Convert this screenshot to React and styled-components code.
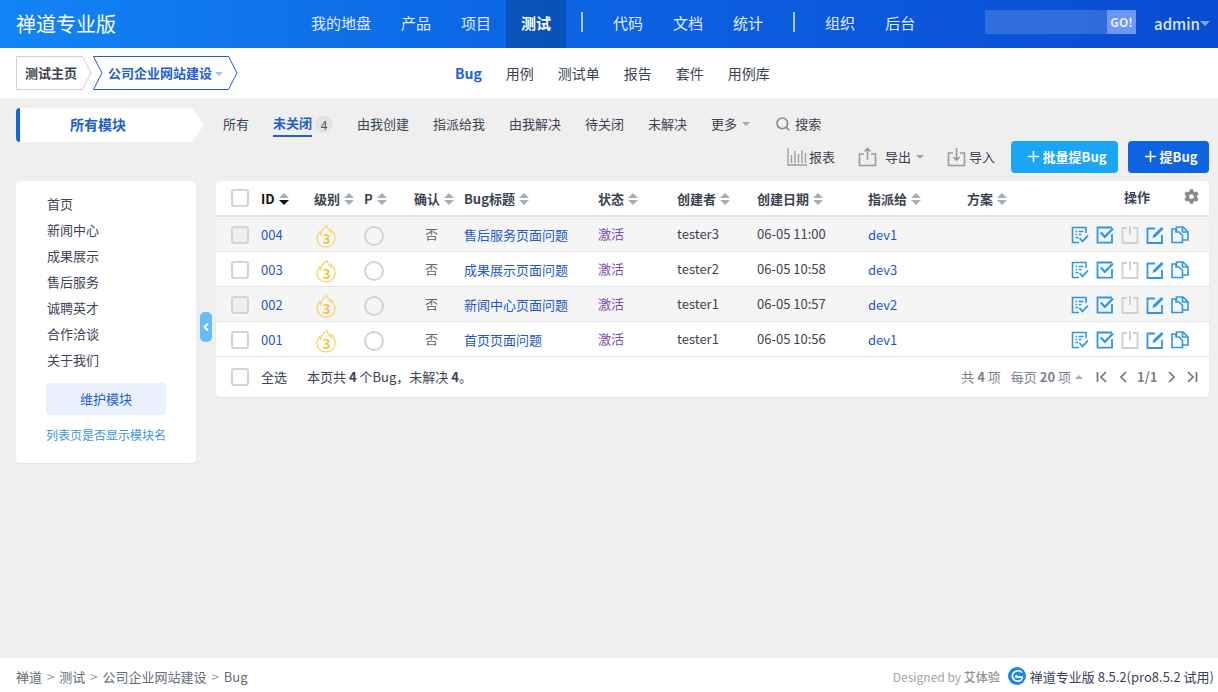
import React from 'react';
import styled, { createGlobalStyle } from 'styled-components';
import { FaCog } from 'react-icons/fa';
import { ChevronLeft, Search, Plus } from 'lucide-react';

const Global = createGlobalStyle`
  * { box-sizing: border-box; }
  html, body { margin: 0; height: 100%; }
  body { font-family: "Noto Sans CJK SC", "Noto Sans", sans-serif; font-size: 13px; color: #3c4353; background: #efefef; }
  #root { min-height: 100vh; }
`;

const Page = styled.div`display: flex; flex-direction: column; height: 692px; overflow: hidden;`;

const Header = styled.header`
  height: 48px; flex: none; display: flex; align-items: center; padding-left: 16px; color: #fff;
  background: linear-gradient(90deg, #1284f5 0%, #0d6ae6 35%, #0a4bd2 100%);
`;
const Brand = styled.div`font-size: 20px; width: 280px; white-space: nowrap; padding-bottom: 2px;`;
const Nav = styled.nav`display: flex; align-items: stretch; height: 48px; flex: 1;`;
const NavItem = styled.a`
  display: flex; align-items: center; padding: 0 15px 3px; font-size: 15px; color: #e4eeff;
  background: ${p => p.$active ? 'rgba(0,0,0,.18)' : 'transparent'};
  font-weight: ${p => p.$active ? 700 : 400};
  ${p => p.$active && 'color:#fff;'}
`;
const NavDivider = styled.span`
  width: 2px; height: 20px; align-self: center; background: rgba(255,255,255,.65); margin: -4px 15px 0;
`;
const SearchBox = styled.div`display: flex; height: 24px; margin: -4px 18px 0 0;`;
const SearchInput = styled.div`width: 122px; background: rgba(255,255,255,.16);`;
const SearchGo = styled.button`
  width: 29px; border: 0; padding: 0 0 1px; background: #6d97f2; color: #e8f0ff; font: 700 12px "Noto Sans CJK SC", sans-serif;
`;
const User = styled.div`display: flex; align-items: center; width: 64px; font-size: 15px; color: #d8e6ff; font-weight: 500; padding-bottom: 2px;`;
const Caret = styled.i`
  display: inline-block; width: 0; height: 0; border: ${p => p.$size || 4}px solid transparent; border-bottom-width: 0;
  border-top-color: ${p => p.$color || '#a0a4ad'}; margin-left: ${p => p.$gap ?? 4}px; vertical-align: middle;
  ${p => p.$up && 'transform: rotate(180deg);'}
`;

const SubBar = styled.div`height: 50px; flex: none; background: #fff; display: flex; align-items: center; position: relative;`;
const Crumbs = styled.div`display: flex; margin-left: 16px; width: 439px; gap: 1px;`;
const Crumb = styled.div`
  position: relative; height: 34px; display: flex; align-items: center; font-weight: 700; font-size: 13px;
  width: ${p => p.$w}px; padding: 0 0 2px ${p => p.$pad}px; color: ${p => p.$color};
  svg.shape { position: absolute; left: 0; top: 0; }
  span { position: relative; }
`;
const SubNav = styled.nav`display: flex; gap: 24px; font-size: 14px; color: #3c4353; padding-bottom: 1px;`;
const SubLink = styled.a`
  ${p => p.$active && 'color:#1f5fcf; font-weight:700;'}
`;

const Main = styled.main`flex: 1; display: grid; grid-template-columns: 200px 993px; padding: 10px 0 0 16px; background: #efefef;`;
const Side = styled.aside`position: relative;`;
const SideHead = styled.div`
  width: 188px; height: 34px; background: #fff; border-left: 4px solid #1765dc; border-radius: 4px 0 0 4px;
  clip-path: polygon(0 0, 176px 0, 188px 50%, 176px 100%, 0 100%);
  display: flex; align-items: center; justify-content: center; padding: 0 28px 2px 0;
  color: #1f5fcf; font-size: 14px; font-weight: 700;
`;
const SideCard = styled.div`
  width: 180px; height: 282px; margin-top: 39px; background: #fff; border-radius: 4px;
  padding: 10px 30px 0 31px; box-shadow: 0 1px 2px rgba(0,0,0,.06);
`;
const ModuleList = styled.ul`list-style: none; margin: 0; padding: 0;`;
const ModuleItem = styled.li`height: 26px; line-height: 25px; color: #3c4353;`;
const MaintainBtn = styled.div`
  width: 120px; height: 32px; margin: 10px 0 0 -1px; border-radius: 4px; background: #e8f1fc; color: #1f5fcf;
  display: flex; align-items: center; justify-content: center; padding-bottom: 2px;
`;
const ModuleNameLink = styled.a`
  display: block; margin: 11px -12px 0 -1px; font-size: 12px; line-height: 18px; color: #3d95e0; white-space: nowrap;
`;
const Toggle = styled.button`
  position: absolute; left: 184px; top: 204px; width: 12px; height: 30px; padding: 0; border: 0; border-radius: 5px;
  background: #66bdf7; color: #fff; display: flex; align-items: center; justify-content: center;
`;

const Content = styled.section`min-width: 0;`;
const Tabs = styled.div`height: 33px; display: flex; align-items: center; padding: 0 0 0 7px; gap: 24px;`;
const Tab = styled.a`
  display: flex; align-items: center; white-space: nowrap; height: 25px; padding-bottom: ${p => p.$active ? 0 : 2}px;
  ${p => p.$active && `color:#1f5fcf; font-weight:700;`}
`;
const TabLabel = styled.span`
  display: inline-block; height: 25px; line-height: 21px; border-bottom: 2px solid #1f5fcf;
`;
const Badge = styled.span`
  width: 18px; height: 17px; margin-left: 3px; border-radius: 9px; background: #e2e2e2; color: #555; font-weight: 400;
  font-size: 12px; display: flex; align-items: center; justify-content: center;
`;
const SearchTab = styled.a`display: flex; align-items: center; gap: 4px; color: #3c4353; margin-left: 1px; padding-bottom: 2px;`;

const Actions = styled.div`height: 32px; margin-bottom: 8px; display: flex; align-items: center; justify-content: flex-end;`;
const ToolLink = styled.a`display: flex; align-items: center; gap: ${p => p.$gap}px; margin-right: ${p => p.$mr}px; white-space: nowrap; padding-bottom: 1px;`;
const PrimaryBtn = styled.button`
  height: 32px; width: ${p => p.$w}px; margin-left: ${p => p.$ml}px; border: 0; border-radius: 4px; color: #fff;
  background: ${p => p.$bg}; font: 700 13px "Noto Sans CJK SC", sans-serif;
  display: flex; align-items: center; justify-content: center; gap: 1px; padding: 0 0 1px 2px;
`;

const Card = styled.div`background: #fff; border-radius: 4px; box-shadow: 0 1px 2px rgba(0,0,0,.06); height: 216px;`;
const cols = '45px 53px 50px 50px 50px 134px 79px 80px 111px 99px 83px 1fr';
const HeadRow = styled.div`
  display: grid; grid-template-columns: ${cols}; height: 36px; align-items: center; border-bottom: 2px solid #e2e2e2;
  font-weight: 700; color: #3c4353;
`;
const Row = styled.div`
  display: grid; grid-template-columns: ${cols}; height: 35px; align-items: center;
  background: ${p => p.$odd ? '#f5f5f5' : '#fff'}; border-bottom: 1px solid #e6e6e6;
`;
const CheckCell = styled.div`padding: ${p => p.$row ? 2 : 0}px 0 0 15px; display: flex;`;
const Check = styled.span`
  width: 18px; height: 18px; border: 2px solid #d4d4d4; border-radius: 3px; display: block;
  background: ${p => p.$odd ? '#efefef' : '#fff'};
`;
const HeadCell = styled.div`display: flex; align-items: center; white-space: nowrap; padding-top: 1px; ${p => p.$black && 'color:#111;'}`;
const SortMark = styled.span`
  display: inline-flex; flex-direction: column; gap: 2px; margin-left: 4px;
  &::before, &::after { content: ''; width: 0; height: 0; border-left: 5px solid transparent; border-right: 5px solid transparent; }
  &::before { border-bottom: 5px solid #a9adb6; }
  &::after { border-top: 5px solid ${p => p.$on ? '#111' : '#a9adb6'}; }
`;
const OpsHead = styled.div`display: flex; align-items: center; justify-content: flex-end; padding: 0 10px 3px 0; gap: 34px;`;
const Cell = styled.div`white-space: nowrap; display: flex; align-items: center; ${p => p.$indent && `padding-left:${p.$indent}px;`} ${p => p.$gray && 'color:#666; padding-bottom: 2px;'} ${p => p.$up && 'padding-bottom: 2px;'}`;
const LinkCell = styled.a`color: #2457c5; white-space: nowrap;`;
const StatusCell = styled.span`color: #7d4cae; white-space: nowrap; padding-bottom: 2px;`;
const Circle = styled.span`width: 20px; height: 20px; border: 2px solid #d2d2d2; border-radius: 50%; display: block; margin-top: 3px;`;
const OpsCell = styled.div`display: flex; justify-content: flex-end; gap: 7px; padding: 2px 20px 0 0;`;

const TableFoot = styled.div`height: 40px; display: flex; align-items: center; padding: 0 11px 0 15px;`;
const SelectAll = styled.span`margin-left: 12px; margin-right: 20px; padding-bottom: 2px;`;
const Summary = styled.span`flex: 1; padding-bottom: 2px; b { font-weight: 700; }`;
const Pager = styled.div`display: flex; align-items: center; color: #7a808c; padding-bottom: 1px; b { font-weight: 700; }`;
const PagerText = styled.span`margin-right: ${p => p.$mr}px; white-space: nowrap; padding-bottom: 1px;`;
const PagerNum = styled.b`margin: 0 9px; font-size: 13px; width: 21px; white-space: nowrap; padding-bottom: 1px;`;
const PagerIcon = styled.svg`flex: none; margin: 0 ${p => p.$mr}px 0 ${p => p.$ml}px; display: block;`;

const Footer = styled.footer`
  height: 34px; flex: none; background: #fff; display: flex; align-items: center; justify-content: space-between; padding: 2px 4px 0 16px;
`;
const Path = styled.div`display: flex; gap: 5px; color: #666b76;`;
const Sep = styled.span`color: #999;`;
const Powered = styled.div`display: flex; align-items: center; white-space: nowrap; color: #3c4353;`;
const Designed = styled.span`color: #a0a3a9; font-size: 12px; margin-right: 7px; b { font-weight: 500; color: #8b8e95; }`;

const blue = '#2d96e6';
const IconLog = () => (
  <svg width="18" height="18" viewBox="0 0 18 18" fill="none" stroke={blue} strokeWidth="1.6">
    <path d="M15 7V1.5H1.5v15H8" /><path d="M4.5 5.5h1.5M7.5 5.5h5M4.5 8.5h1.5M7.5 8.5h3M4.5 11.5h3" strokeWidth="1.3" /><path d="M8.5 12l3 3.4L17 9.5" strokeWidth="1.8" />
  </svg>
);
const IconCheck = () => (
  <svg width="18" height="18" viewBox="0 0 18 18" fill="none" stroke={blue} strokeWidth="1.8">
    <path d="M16 8v8.600H1.500V1.500H16" /><path d="M4.800 6.500l4 4.300L17 2.500" strokeWidth="2.200" />
  </svg>
);
const IconClose = () => (
  <svg width="18" height="18" viewBox="0 0 18 18" fill="none" stroke="#cfcfcf" strokeWidth="1.8">
    <path d="M6 2H1.500v15h15V2H12" /><path d="M9 0v9" strokeWidth="2" />
  </svg>
);
const IconEdit = () => (
  <svg width="18" height="18" viewBox="0 0 18 18" fill="none" stroke={blue} strokeWidth="1.8">
    <path d="M9 2.500H1.500v14.500h14.500V9" /><path d="M6.500 12l.7-3L15.500 1l2 2-8 8z" fill={blue} stroke="none" />
  </svg>
);
const IconCopy = () => (
  <svg width="18" height="18" viewBox="0 0 18 18" fill="none" stroke={blue} strokeWidth="1.6">
    <path d="M5 3H1v13.500h10.500V9.500L8 6H5z" /><path d="M5.500 5V1H12l5 5v8h-5" /><path d="M11.500 1v5H17" />
  </svg>
);
const Flame = () => (
  <svg width="20" height="24" viewBox="0 0 22 26" fill="none" style={{ display: 'block', margin: '3px 0 0 2px' }}>
    <path d="M12 1.500c.5 3.500 2.800 5 4.500 7.500.3-1 .3-1.800.2-2.800C19.500 9 21 12 21 15.500 21 21 16.500 25 11 25S1 21 1 15.500C1 12.500 2.500 10.500 4 8.500c.2 1.200.6 2 1.300 2.800C5.500 7.500 8.500 3.500 12 1.500z" stroke="#f6d67a" strokeWidth="1.500" />
    <text x="11.500" y="21.500" textAnchor="middle" fontSize="15" fontWeight="700" fill="#f0c44c" fontFamily="Noto Sans CJK SC, sans-serif">3</text>
  </svg>
);
const ReportIcon = () => (
  <svg width="20" height="18" viewBox="0 0 20 18" fill="none" stroke="#9a9a9a" strokeWidth="1.3">
    <path d="M1 0v17h19" /><path d="M4.500 7v8M8 3v12M11.500 6v9M15 2v13M18.500 5v10" />
  </svg>
);
const ExportIcon = () => (
  <svg width="20" height="20" viewBox="0 0 20 20" fill="none" stroke="#9a9a9a" strokeWidth="1.600">
    <path d="M6 7H1.500v11.500h16V7H13" /><path d="M9.500 13V1.500M6.500 4.500l3-3 3 3" />
  </svg>
);
const ImportIcon = () => (
  <svg width="20" height="20" viewBox="0 0 20 20" fill="none" stroke="#9a9a9a" strokeWidth="1.600">
    <path d="M6 6H1.500v12.500h16V6H13" /><path d="M9.500 1v12M6.500 10l3 3 3-3" />
  </svg>
);
const Logo = () => (
  <svg width="18" height="18" viewBox="0 0 18 18" style={{ margin: '0 4px 0 1px' }}>
    <circle cx="9" cy="9" r="9" fill="#1a88e8" />
    <path d="M14 5.500C11.500 2.800 6.500 3.200 4.800 7c-1.300 3.200.8 7.200 4.700 7.200 2.600 0 4.500-1.600 4.700-4H9.800" fill="none" stroke="#fff" strokeWidth="1.700" />
    <circle cx="8.500" cy="9.500" r="1.600" fill="#fff" />
  </svg>
);
const pagerPaths = {
  first: 'M1.500 1v10M10 1L5 6l5 5',
  prev: 'M7 1L2 6l5 5',
  next: 'M2 1l5 5-5 5',
  last: 'M1 1l5 5-5 5M9.500 1v10',
};
const PagerBtn = ({ kind, w, ml = 0, mr = 0 }) => (
  <PagerIcon $ml={ml} $mr={mr} width={w} height="12" viewBox={`0 0 ${w} 12`} fill="none" stroke="#6f7582" strokeWidth="1.700">
    <path d={pagerPaths[kind]} />
  </PagerIcon>
);

const headers = [['ID', true], ['级别'], ['P'], ['确认'], ['Bug标题'], ['状态'], ['创建者'], ['创建日期'], ['指派给'], ['方案']];
const bugs = [
  ['004', '售后服务页面问题', 'tester3', '06-05 11:00', 'dev1'],
  ['003', '成果展示页面问题', 'tester2', '06-05 10:58', 'dev3'],
  ['002', '新闻中心页面问题', 'tester1', '06-05 10:57', 'dev2'],
  ['001', '首页页面问题', 'tester1', '06-05 10:56', 'dev1'],
];
const modules = ['首页', '新闻中心', '成果展示', '售后服务', '诚聘英才', '合作洽谈', '关于我们'];

export default function App() {
  return (
    <Page>
      <Global />
      <Header>
        <Brand>禅道专业版</Brand>
        <Nav>
          <NavItem>我的地盘</NavItem>
          <NavItem>产品</NavItem>
          <NavItem>项目</NavItem>
          <NavItem $active>测试</NavItem>
          <NavDivider />
          <NavItem>代码</NavItem>
          <NavItem>文档</NavItem>
          <NavItem>统计</NavItem>
          <NavDivider />
          <NavItem>组织</NavItem>
          <NavItem>后台</NavItem>
        </Nav>
        <SearchBox>
          <SearchInput />
          <SearchGo>GO!</SearchGo>
        </SearchBox>
        <User>admin<Caret $size={5} $color="#7fa6ee" $gap={0} /></User>
      </Header>

      <SubBar>
        <Crumbs>
          <Crumb $w={76} $pad={9} $color="#3c4353">
            <svg className="shape" width="76" height="34"><path d="M.5.5h66l8.500 16.500-8.500 16.500H.5z" fill="#fff" stroke="#d0d0d0" /></svg>
            <span>测试主页</span>
          </Crumb>
          <Crumb $w={144} $pad={15} $color="#1f5fcf">
            <svg className="shape" width="145" height="34"><path d="M.5.5h135l8.500 16.500-8.500 16.500H.5l8.500-16.500z" fill="#fff" stroke="#1f5fcf" /></svg>
            <span>公司企业网站建设<Caret $color="#a8bde6" $gap={3} /></span>
          </Crumb>
        </Crumbs>
        <SubNav>
          <SubLink $active>Bug</SubLink>
          <SubLink>用例</SubLink>
          <SubLink>测试单</SubLink>
          <SubLink>报告</SubLink>
          <SubLink>套件</SubLink>
          <SubLink>用例库</SubLink>
        </SubNav>
      </SubBar>

      <Main>
        <Side>
          <SideHead>所有模块</SideHead>
          <SideCard>
            <ModuleList>
              {modules.map(m => <ModuleItem key={m}>{m}</ModuleItem>)}
            </ModuleList>
            <MaintainBtn>维护模块</MaintainBtn>
            <ModuleNameLink>列表页是否显示模块名</ModuleNameLink>
          </SideCard>
          <Toggle><ChevronLeft size={12} strokeWidth={4} /></Toggle>
        </Side>
        <Content>
          <Tabs>
            <Tab>所有</Tab>
            <Tab $active><TabLabel>未关闭</TabLabel><Badge>4</Badge></Tab>
            <Tab>由我创建</Tab>
            <Tab>指派给我</Tab>
            <Tab>由我解决</Tab>
            <Tab>待关闭</Tab>
            <Tab>未解决</Tab>
            <Tab>更多<Caret $gap={5} /></Tab>
            <SearchTab><Search size={16} color="#8a8a8a" strokeWidth={2.4} />搜索</SearchTab>
          </Tabs>
          <Actions>
            <ToolLink $gap={2} $mr={23}><ReportIcon />报表</ToolLink>
            <ToolLink $gap={7} $mr={23}><ExportIcon />导出<Caret $gap={-2} /></ToolLink>
            <ToolLink $gap={2} $mr={0}><ImportIcon />导入</ToolLink>
            <PrimaryBtn $w={107} $ml={16} $bg="#18a6f5"><Plus size={17} strokeWidth={2.2} />批量提Bug</PrimaryBtn>
            <PrimaryBtn $w={81} $ml={10} $bg="#0d63e0"><Plus size={17} strokeWidth={2.2} />提Bug</PrimaryBtn>
          </Actions>
          <Card>
            <HeadRow>
              <CheckCell><Check /></CheckCell>
              {headers.map(([h, on]) => (
                <HeadCell key={h} $black={on}>{h}<SortMark $on={on} /></HeadCell>
              ))}
              <OpsHead>操作<FaCog size={15} color="#8a8a8a" /></OpsHead>
            </HeadRow>
            {bugs.map(([id, title, creator, date, to], i) => {
              const odd = i % 2 === 0;
              return (
                <Row key={id} $odd={odd}>
                  <CheckCell $row><Check $odd={odd} /></CheckCell>
                  <LinkCell>{id}</LinkCell>
                  <Cell><Flame /></Cell>
                  <Cell><Circle /></Cell>
                  <Cell $indent={11} $gray>否</Cell>
                  <LinkCell>{title}</LinkCell>
                  <StatusCell>激活</StatusCell>
                  <Cell $up>{creator}</Cell>
                  <Cell $up>{date}</Cell>
                  <LinkCell>{to}</LinkCell>
                  <Cell />
                  <OpsCell>
                    <IconLog /><IconCheck /><IconClose /><IconEdit /><IconCopy />
                  </OpsCell>
                </Row>
              );
            })}
            <TableFoot>
              <Check />
              <SelectAll>全选</SelectAll>
              <Summary>本页共 <b>4</b> 个Bug，未解决 <b>4</b>。</Summary>
              <Pager>
                <PagerText $mr={10}>共 <b>4</b> 项</PagerText>
                <PagerText $mr={4}>每页 <b>20</b> 项</PagerText>
                <Caret $up $gap={0} $color="#a9adb6" />
                <PagerBtn kind="first" w={11} ml={13} mr={12} />
                <PagerBtn kind="prev" w={9} />
                <PagerNum>1/1</PagerNum>
                <PagerBtn kind="next" w={9} />
                <PagerBtn kind="last" w={11} ml={11} />
              </Pager>
            </TableFoot>
          </Card>
        </Content>
      </Main>

      <Footer>
        <Path>
          <span>禅道</span><Sep>&gt;</Sep><span>测试</span><Sep>&gt;</Sep><span>公司企业网站建设</span><Sep>&gt;</Sep><span>Bug</span>
        </Path>
        <Powered>
          <Designed>Designed by <b>艾体验</b></Designed>
          <Logo />禅道专业版 8.5.2(pro8.5.2 试用)
        </Powered>
      </Footer>
    </Page>
  );
}
